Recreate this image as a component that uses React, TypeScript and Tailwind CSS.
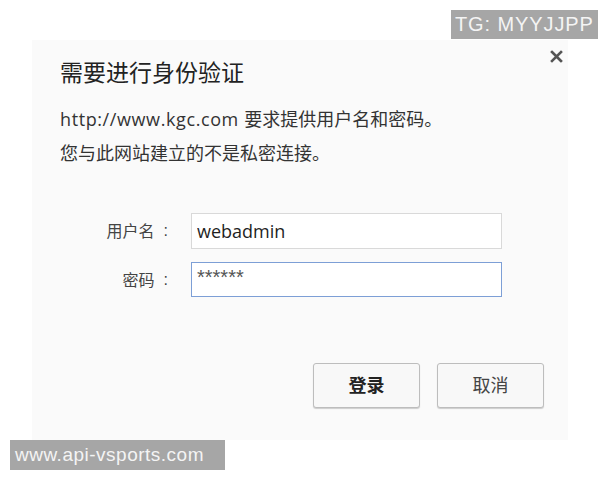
import React from "react";

const cjk = "font-['Open_Sans','Noto_Sans_CJK_SC',sans-serif]";

const CloseIcon = () => (
  <svg width="13" height="13" viewBox="0 0 13 13">
    <path d="M2 2 L11 11 M11 2 L2 11" stroke="#555" strokeWidth="2.6" strokeLinecap="square" />
  </svg>
);

const App = () => {
  return (
    <div className={`relative w-[600px] h-[480px] bg-white pt-[40px] pl-[32px] overflow-hidden ${cjk}`}>
      <div className="relative w-[536px] h-[400px] bg-[#fafafa] flex flex-col">
        <button className="absolute top-[10px] right-[5px] w-[13px] h-[13px] flex items-center justify-center">
          <CloseIcon />
        </button>

        <h2 className="pl-[28px] mt-[17px] text-[23px] leading-[30px] text-[#222] font-normal">
          需要进行身份验证
        </h2>

        <div className="pl-[28px] mt-[15px] text-[18px] leading-[34px] text-[#333]">
          <p>
            <span className="tracking-[0.6px]">http://www.kgc.com </span>要求提供用户名和密码。
          </p>
          <p>您与此网站建立的不是私密连接。</p>
        </div>

        <form className="mt-[43px] flex flex-col gap-[13px]">
          <div className="flex items-center h-[36px]">
            <label
              htmlFor="username"
              className="w-[136px] flex justify-end text-[16px] text-[#444]"
            >
              用户名<span className="ml-[9px] font-['Liberation_Sans',sans-serif]">:</span>
            </label>
            <input
              type="text"
              id="username"
              name="username"
              defaultValue="webadmin"
              className="ml-[23px] w-[311px] h-[36px] border border-[#d9d9d9] bg-white px-[5px] text-[18px] text-[#1f1f1f] outline-none"
            />
          </div>
          <div className="flex items-center h-[35px]">
            <label
              htmlFor="password"
              className="w-[136px] flex justify-end text-[16px] text-[#444]"
            >
              密码<span className="ml-[9px] font-['Liberation_Sans',sans-serif]">:</span>
            </label>
            <input
              type="text"
              id="password"
              name="password"
              defaultValue="******"
              className="ml-[23px] w-[311px] h-[35px] border border-[#7d9fd6] bg-white px-[5px] pb-[4px] text-[20px] text-[#555] font-['Liberation_Sans',sans-serif] outline-none"
            />
          </div>
        </form>

        <div className="mt-auto mb-[32px] pr-[24px] flex justify-end gap-[17px]">
          <button className="w-[107px] h-[45px] rounded-[3px] border border-[#bdbdbd] bg-[#f8f8f8] shadow-[0_1px_1px_rgba(0,0,0,0.18)] text-[18px] font-bold text-[#222]">
            登录
          </button>
          <button className="w-[107px] h-[45px] rounded-[3px] border border-[#bdbdbd] bg-[#f8f8f8] shadow-[0_1px_1px_rgba(0,0,0,0.18)] text-[18px] text-[#444]">
            取消
          </button>
        </div>
      </div>

      <div className="absolute left-[451px] top-[10px] w-[147px] h-[29px] bg-[#a6a6a6] pl-[4px] text-[20px] leading-[29px] tracking-[0.9px] text-[#f4f4f4] font-['Liberation_Sans',sans-serif]">
        TG: MYYJJPP
      </div>
      <div className="absolute left-[10px] top-[440px] w-[215px] h-[30px] bg-[#a6a6a6] pl-[5px] text-[19px] leading-[30px] tracking-[0.5px] text-[#f4f4f4] font-['Liberation_Sans',sans-serif]">
        www.api-vsports.com
      </div>
    </div>
  );
};

export default App;
